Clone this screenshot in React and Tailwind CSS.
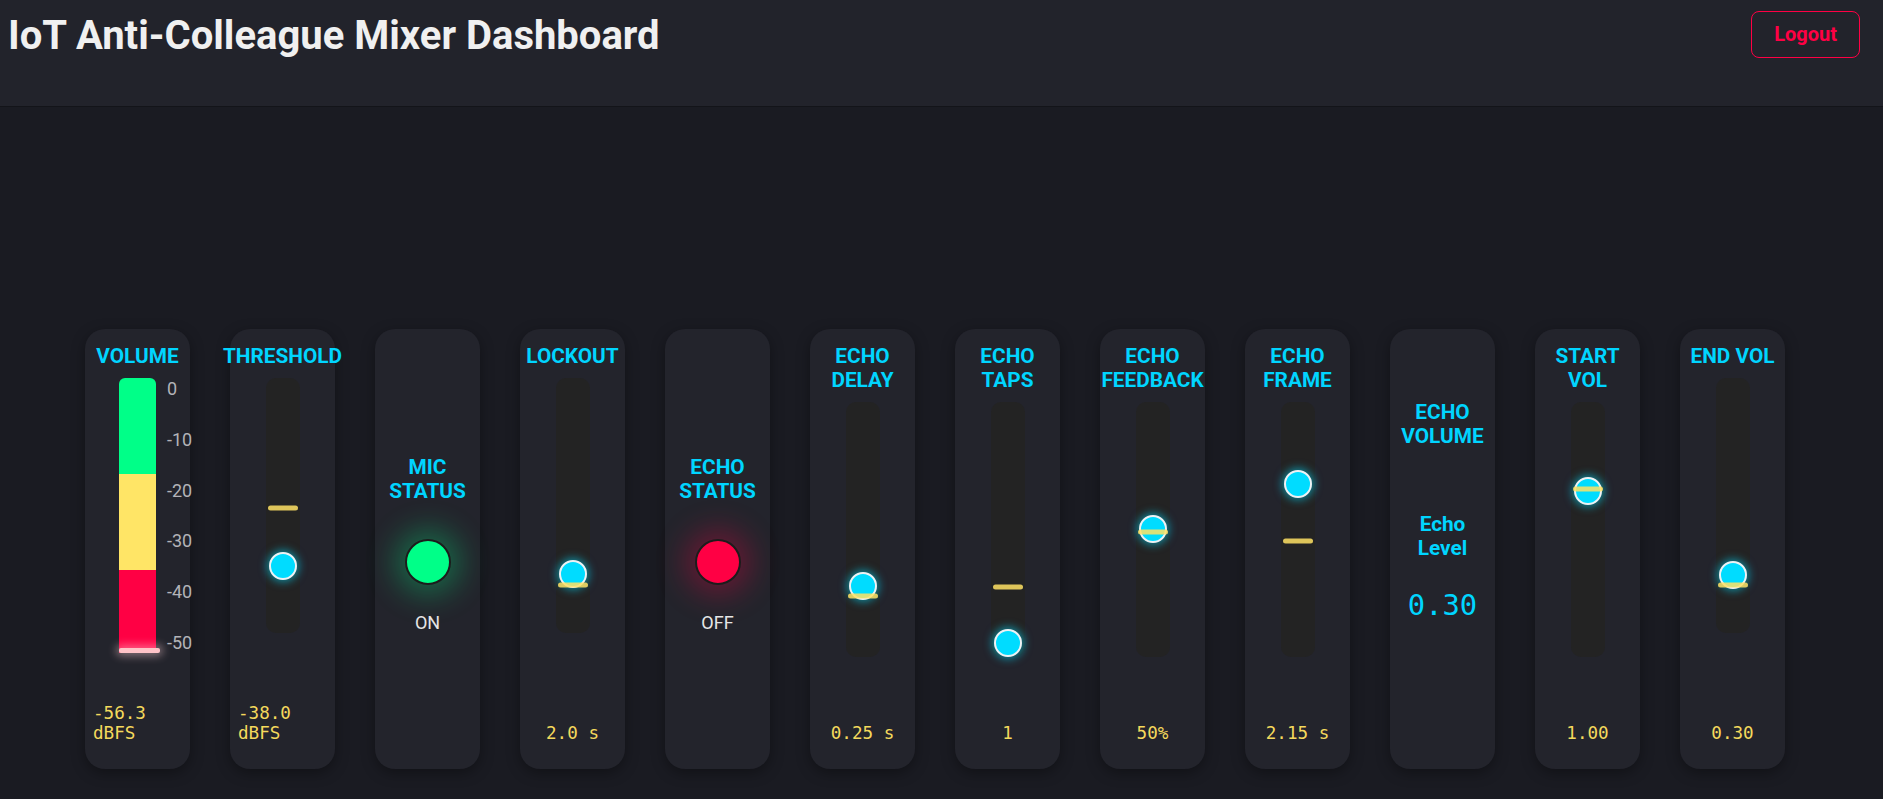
import React from 'react';

const SANS = "font-['Roboto',sans-serif]";
const MONO = "font-['DejaVu_Sans_Mono',monospace]";

// thumb / marker = centre offset (px) from the top of the 255px track
const CARDS = [
  { kind: 'meter', title: ['VOLUME'], value: '-56.3 dBFS' },
  { kind: 'slider', title: ['THRESHOLD'], value: '-38.0 dBFS', thumb: 188, marker: 130 },
  { kind: 'status', title: ['MIC', 'STATUS'], on: true },
  { kind: 'slider', title: ['LOCKOUT'], value: '2.0 s', thumb: 196, marker: 207 },
  { kind: 'status', title: ['ECHO', 'STATUS'], on: false },
  { kind: 'slider', title: ['ECHO', 'DELAY'], value: '0.25 s', thumb: 184, marker: 194 },
  { kind: 'slider', title: ['ECHO', 'TAPS'], value: '1', thumb: 241, marker: 184.5 },
  { kind: 'slider', title: ['ECHO', 'FEEDBACK'], value: '50%', thumb: 127, marker: 129.5 },
  { kind: 'slider', title: ['ECHO', 'FRAME'], value: '2.15 s', thumb: 82, marker: 138.7 },
  { kind: 'echoVol', title: ['ECHO', 'VOLUME'] },
  { kind: 'slider', title: ['START', 'VOL'], value: '1.00', thumb: 89, marker: 86.7 },
  { kind: 'slider', title: ['END VOL'], value: '0.30', thumb: 196.7, marker: 207 },
];

function Title({ lines }) {
  return (
    <div className={`text-center text-[20.8px] font-bold leading-[24px] text-[#00d5ff] ${SANS}`}>
      {lines.map((l, i) => (
        <div key={i} className="whitespace-nowrap">{l}</div>
      ))}
    </div>
  );
}

function Value({ text }) {
  return (
    <div className={`mt-auto text-[17.6px] leading-[20px] text-[#f4d95c] ${MONO}`}>{text}</div>
  );
}

function Meter() {
  const labels = ['0', '-10', '-20', '-30', '-40', '-50'];
  return (
    <div className="relative mt-[10px] h-[275px] w-[37px]">
      <div className="h-full w-full rounded-t-[6px] bg-[linear-gradient(to_top,#ff0044_0%,#ff0044_30%,#ffe566_30%,#ffe566_65%,#00ff88_65%,#00ff88_100%)]" />
      <div className="absolute bottom-0 left-0 h-[5px] w-[41px] rounded-[2px] bg-[#ffc4c8] shadow-[0_0_8px_3px_rgba(255,210,215,0.45)]" />
      <div className={`absolute left-[48px] top-0 flex h-full flex-col justify-between text-[18px] leading-[21px] text-[#b3b3b8] ${SANS}`}>
        {labels.map((l) => (
          <span key={l}>{l}</span>
        ))}
      </div>
    </div>
  );
}

function Slider({ thumb, marker }) {
  return (
    <div className="relative mt-[10px] h-[255px] w-[34px] shrink-0 rounded-[10px] bg-[#232323]">
      <div
        className="absolute left-1/2 h-[28px] w-[28px] -translate-x-1/2 -translate-y-1/2 rounded-full border-2 border-[#eef2f4] bg-[#00dcff] shadow-[0_0_8px_2px_rgba(0,220,255,0.55)]"
        style={{ top: thumb }}
      />
      <div
        className="absolute left-[2px] right-[2px] h-[5px] -translate-y-1/2 rounded-full bg-[rgba(255,226,100,0.85)]"
        style={{ top: marker }}
      />
    </div>
  );
}

function Card({ card }) {
  const base =
    'flex h-[440px] w-[105px] shrink-0 flex-col items-center rounded-[20px] bg-[#23242c] px-2 pt-[15px] pb-[26px] shadow-[0_4px_14px_rgba(0,0,0,0.35)]';

  if (card.kind === 'status') {
    return (
      <div className={`${base} justify-center`}>
        <Title lines={card.title} />
        <div
          className={
            card.on
              ? 'mt-[36px] h-[46px] w-[46px] rounded-full border-2 border-[#1c1c1c] bg-[#00ff88] shadow-[0_0_30px_10px_rgba(0,255,136,0.3)]'
              : 'mt-[36px] h-[46px] w-[46px] rounded-full border-2 border-[#1c1c1c] bg-[#ff0044] shadow-[0_0_30px_10px_rgba(255,0,68,0.3)]'
          }
        />
        <div className={`mt-[27px] text-[18px] leading-[21px] text-[#e6e6e6] ${SANS}`}>{card.on ? 'ON' : 'OFF'}</div>
      </div>
    );
  }

  if (card.kind === 'echoVol') {
    return (
      <div className={base}>
        <div className="mt-[56px]">
          <Title lines={card.title} />
        </div>
        <div className="mt-[64px]">
          <Title lines={['Echo', 'Level']} />
        </div>
        <div className={`mt-[28px] text-[28.8px] leading-[34px] text-[#00d5ff] ${MONO}`}>0.30</div>
      </div>
    );
  }

  return (
    <div className={base}>
      <Title lines={card.title} />
      {card.kind === 'meter' ? <Meter /> : <Slider thumb={card.thumb} marker={card.marker} />}
      <Value text={card.value} />
    </div>
  );
}

export default function App() {
  return (
    <div className={`min-h-screen bg-[#1a1b22] ${SANS}`}>
      {/* top bar */}
      <div className="flex h-[107px] items-start justify-between border-b border-[#131419] bg-[#22232b] pl-2 pr-[23px]">
        <h1 className="pt-[12px] text-[40px] font-bold leading-[47px] text-[#f0f0f0]">IoT Anti-Colleague Mixer Dashboard</h1>
        <button className="mt-[11px] rounded-[8px] border border-[#ff0044] px-[22px] py-[11px] text-[20px] font-bold leading-[23px] text-[#ff0044]">
          Logout
        </button>
      </div>

      {/* mixer strip */}
      <div className="flex gap-[40px] pl-[85px] pt-[222px]">
        {CARDS.map((c, i) => (
          <Card key={i} card={c} />
        ))}
      </div>
    </div>
  );
}
